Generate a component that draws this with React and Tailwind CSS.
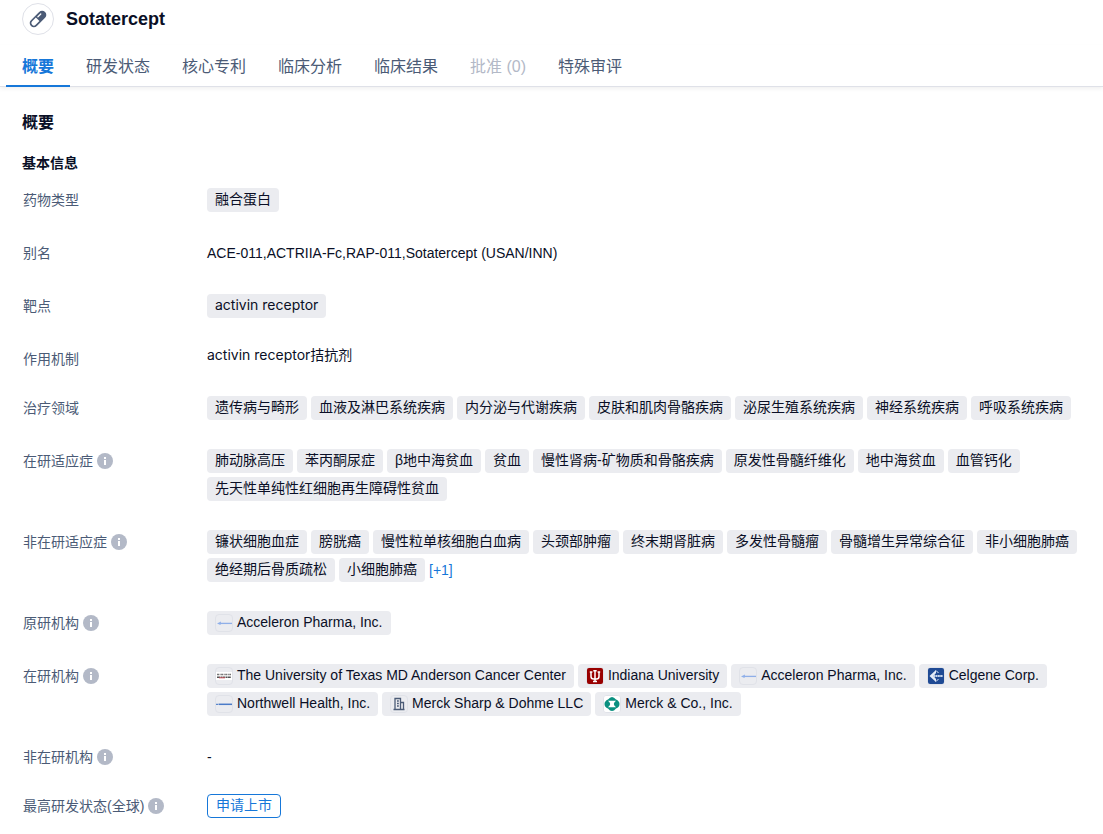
import React, { useState } from 'react';
import { clsx } from 'clsx';

const TABS = [
  { id: 'overview', label: '概要' },
  { id: 'status', label: '研发状态' },
  { id: 'patent', label: '核心专利' },
  { id: 'analysis', label: '临床分析' },
  { id: 'result', label: '临床结果' },
  { id: 'approval', label: '批准 (0)', disabled: true },
  { id: 'review', label: '特殊审评' },
];

const AREAS = ['遗传病与畸形', '血液及淋巴系统疾病', '内分泌与代谢疾病', '皮肤和肌肉骨骼疾病', '泌尿生殖系统疾病', '神经系统疾病', '呼吸系统疾病'];

const ACTIVE_INDICATIONS = ['肺动脉高压', '苯丙酮尿症', 'β地中海贫血', '贫血', '慢性肾病-矿物质和骨骼疾病', '原发性骨髓纤维化', '地中海贫血', '血管钙化', '先天性单纯性红细胞再生障碍性贫血'];

const INACTIVE_INDICATIONS = ['镰状细胞血症', '膀胱癌', '慢性粒单核细胞白血病', '头颈部肿瘤', '终末期肾脏病', '多发性骨髓瘤', '骨髓增生异常综合征', '非小细胞肺癌', '绝经期后骨质疏松', '小细胞肺癌'];

const ACTIVE_ORGS = [
  { name: 'The University of Texas MD Anderson Cancer Center', logo: 'mdanderson' },
  { name: 'Indiana University', logo: 'indiana' },
  { name: 'Acceleron Pharma, Inc.', logo: 'acceleron' },
  { name: 'Celgene Corp.', logo: 'celgene' },
  { name: 'Northwell Health, Inc.', logo: 'northwell' },
  { name: 'Merck Sharp & Dohme LLC', logo: 'building' },
  { name: 'Merck & Co., Inc.', logo: 'merck' },
];

// 16x16 marks shown inside the organisation chips
const LOGOS = {
  acceleron: (
    <>
      <path d="M1 8.5 5 6.5 4.5 10z" fill="#8fb0ea" />
      <path d="M4 8.4h12" stroke="#8fafe8" strokeWidth="1.3" />
    </>
  ),
  mdanderson: (
    <>
      <path d="M0 4h16v8H0z" fill="#fff" />
      <path d="M1 6.5h14" stroke="#777" strokeWidth="1.6" strokeDasharray="2 .6 1 .5" />
      <path d="M1 9.2h14" stroke="#555" strokeWidth="1.6" strokeDasharray="3 .5 1.5 .4" />
      <path d="M3 9.8h6" stroke="#c8505a" />
    </>
  ),
  indiana: (
    <>
      <rect width="16" height="16" rx="2" fill="#990000" />
      <path d="M8 2v12M4 4v4.500Q4 11 6.500 11h3Q12 11 12 8.500V4M6.300 2.700h3.400M6 13.500h4M2.800 4h2.600M10.600 4h2.600" fill="none" stroke="#fff" strokeWidth="1.500" />
    </>
  ),
  celgene: (
    <>
      <rect width="16" height="16" rx="2" fill="#1f4a94" />
      <path d="M1.500 8 8 2v3L5.500 8 8 11v3z" fill="#e3ebf7" />
      <path d="M8 2.500 10.500 5M8 13.500l2.500-2.500" stroke="#e3ebf7" />
      <path d="M5 8h10" stroke="#c5d3ea" strokeWidth="1.800" strokeDasharray="2 .4" />
    </>
  ),
  northwell: (
    <>
      <path d="M0 8.300h2" stroke="#5b87cb" strokeWidth="1.200" />
      <path d="M2.500 8.300H16" stroke="#4a7bc8" strokeWidth="1.500" />
    </>
  ),
  building: (
    <path d="M2.500 13.500h11M4 13.500V2.500h5.500v11M9.500 6.500h3v7M6 5h1.800M6 7.500h1.800M6 10h1.800" fill="none" stroke="#4b5b76" strokeWidth="1.300" />
  ),
  merck: (
    <>
      <rect width="16" height="16" rx="2" fill="#fff" />
      <path d="M4 3.500Q8-1.500 12 3.500Q15.500 5 15.500 8t-3.500 4.500Q8 17.500 4 12.500.5 11 .5 8T4 3.500z" fill="#0a9080" />
      <path d="M4 4.800h8Q9.800 6.500 9.800 8T12 11.200H4Q6.200 9.500 6.200 8T4 4.800z" fill="#fff" />
    </>
  ),
};

function OrgLogo({ type }) {
  return (
    <span className="flex size-[18px] shrink-0 items-center justify-center rounded-sm border border-[#e0e2e8]">
      <svg viewBox="0 0 16 16" className="size-4 shrink-0" aria-hidden="true">{LOGOS[type]}</svg>
    </span>
  );
}

function Chip({ children, logo }) {
  return (
    <a href="#" className="flex h-6 items-center gap-1 rounded bg-[#ebecf0] px-2 text-[#0a0f26]">
      {logo && <OrgLogo type={logo} />}
      <span className="pb-0.5 leading-5">{children}</span>
    </a>
  );
}

function InfoIcon() {
  return (
    <svg viewBox="0 0 16 16" className="size-4" aria-hidden="true">
      <circle cx="8" cy="8" r="8" fill="#b3b9c7" />
      <path d="M7 4h2v2H7zM7 7h2v5H7z" fill="#fff" />
    </svg>
  );
}

function Row({ label, info, children }) {
  return (
    <div className="flex pb-[25px]">
      <dt className="flex h-6 w-[185px] shrink-0 items-center gap-1 pl-px text-[#4b5b76]">
        {label}
        {info && <InfoIcon />}
      </dt>
      <dd className="min-w-0 flex-1">{children}</dd>
    </div>
  );
}

function Chips({ children }) {
  return <div className="flex flex-wrap gap-1 pb-1">{children}</div>;
}

export default function App() {
  const [tab, setTab] = useState('overview');

  return (
    <div className="min-h-screen bg-white font-['Liberation_Sans','Noto_Sans_CJK_SC',sans-serif] text-sm text-[#0a0f26]">
      <header className="flex items-center gap-3 px-[22px] pt-[3px]">
        <span className="flex size-8 items-center justify-center rounded-full border border-[#dfe1e8]">
          <svg viewBox="0 0 18 18" className="size-[18px]" aria-hidden="true">
            <g transform="rotate(-45 9 9)">
              <rect x="-1" y="4.8" width="20" height="8.4" rx="4.2" fill="#4b5b76" />
              <path d="M8.500 6.500H3.200a2.500 2.500 0 0 0 0 5h5.300z" fill="#fff" />
              <path d="M10.500 7.400h4" stroke="#fff" strokeWidth="1.300" strokeLinecap="round" />
            </g>
          </svg>
        </span>
        <h1 className="text-lg leading-8 font-bold">Sotatercept</h1>
      </header>

      <nav role="tablist" className="mt-2.5 flex border-b border-[#dfe1e8] px-1.5 text-base shadow-[0_2px_4px_rgba(0,0,0,0.06)]">
        {TABS.map((t) => (
          <button
            key={t.id}
            role="tab"
            aria-selected={tab === t.id}
            disabled={t.disabled}
            onClick={() => setTab(t.id)}
            className={clsx(
              '-mb-px h-[42px] border-b-2 px-4 pt-1',
              t.disabled && 'border-transparent text-[#b3b9c7]',
              !t.disabled && tab === t.id && 'border-[#1677d9] font-bold text-[#1677d9]',
              !t.disabled && tab !== t.id && 'border-transparent text-[#4b5b76]'
            )}
          >
            {t.label}
          </button>
        ))}
      </nav>

      <main className="px-[22px] pt-6">
        <h2 className="text-base leading-6 font-bold">概要</h2>
        <h3 className="mt-[18px] mb-[15px] leading-5 font-bold">基本信息</h3>

        <dl>
          <Row label="药物类型">
            <Chips><Chip>融合蛋白</Chip></Chips>
          </Row>
          <Row label="别名">
            <p className="pb-1 leading-6">ACE-011,ACTRIIA-Fc,RAP-011,Sotatercept (USAN/INN)</p>
          </Row>
          <Row label="靶点">
            <Chips>
              <Chip><span className="font-['Inter',sans-serif]">activin receptor</span></Chip>
            </Chips>
          </Row>
          <Row label="作用机制">
            <a href="#" className="block font-['Inter','Noto_Sans_CJK_SC',sans-serif] leading-4">activin receptor拮抗剂</a>
          </Row>
          <Row label="治疗领域">
            <Chips>{AREAS.map((a) => <Chip key={a}>{a}</Chip>)}</Chips>
          </Row>
          <Row label="在研适应症" info>
            <Chips>{ACTIVE_INDICATIONS.map((d) => <Chip key={d}>{d}</Chip>)}</Chips>
          </Row>
          <Row label="非在研适应症" info>
            <Chips>
              {INACTIVE_INDICATIONS.map((d) => <Chip key={d}>{d}</Chip>)}
              <button className="text-[#1677d9]">[+1]</button>
            </Chips>
          </Row>
          <Row label="原研机构" info>
            <Chips><Chip logo="acceleron">Acceleron Pharma, Inc.</Chip></Chips>
          </Row>
          <Row label="在研机构" info>
            <Chips>{ACTIVE_ORGS.map((o) => <Chip key={o.name} logo={o.logo}>{o.name}</Chip>)}</Chips>
          </Row>
          <Row label="非在研机构" info>
            <p className="leading-6">-</p>
          </Row>
          <Row label="最高研发状态(全球)" info>
            <span className="inline-flex h-6 items-center rounded border border-[#1677d9] px-2 pb-0.5 text-[#1677d9]">申请上市</span>
          </Row>
        </dl>
      </main>
    </div>
  );
}
